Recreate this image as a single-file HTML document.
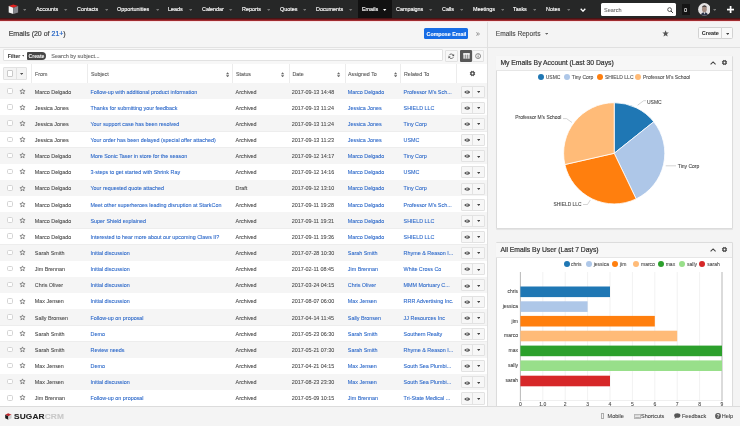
<!DOCTYPE html><html><head><meta charset="utf-8"><style>
*{margin:0;padding:0;box-sizing:border-box}
html,body{width:740px;height:426px;overflow:hidden;background:#fff;font-family:"Liberation Sans",sans-serif;color:#555}
#w{position:absolute;left:0;top:0;width:740px;height:426px;will-change:transform;overflow:hidden}
.a{position:absolute}
.car{position:absolute;width:0;height:0;border-left:1.7px solid transparent;border-right:1.7px solid transparent}
.tx{position:absolute;white-space:nowrap;line-height:1;-webkit-text-stroke:0.08px currentColor}
.lnk{color:#2a67c9}
</style></head><body><div id="w">
<div class="a" style="left:0px;top:0px;width:740px;height:17.6px;background:#262727"></div>
<div class="a" style="left:0px;top:17.5px;width:740px;height:1px;background:#4a1315"></div>
<div class="a" style="left:0px;top:18.5px;width:740px;height:1px;background:#6e1c1e"></div>
<div class="a" style="left:0px;top:19.5px;width:740px;height:1.1px;background:#a02c30"></div>
<div class="a" style="left:0px;top:20.5px;width:740px;height:1.2px;background:#f8e2e4"></div>
<svg class="a" style="left:8px;top:4px" width="11" height="11" viewBox="0 0 11 11">
<polygon points="5.3,0.6 10.1,2.1 5.3,3.7 0.7,2.1" fill="#e3211f"/>
<polygon points="0.7,2.1 5.3,3.7 5.3,10.1 0.7,8.6" fill="#f4f4f4"/>
<polygon points="5.3,3.7 10.1,2.1 10.1,8.6 5.3,10.1" fill="#85868c"/></svg>
<svg class="a" style="left:22.60px;top:8.75px" width="3.4" height="1.9" viewBox="0 0 3.4 1.9"><polygon points="0,0 3.4,0 1.7,1.9" fill="#777"/></svg>
<div class="tx " style="left:35.7px;top:6px;font-size:6px;color:#fff;-webkit-text-stroke:0.15px #fff;transform:scaleX(0.9);transform-origin:0 0">Accounts</div>
<svg class="a" style="left:64.20px;top:9.15px" width="3.4" height="1.9" viewBox="0 0 3.4 1.9"><polygon points="0,0 3.4,0 1.7,1.9" fill="#777"/></svg>
<div class="tx " style="left:77px;top:6px;font-size:6px;color:#fff;-webkit-text-stroke:0.15px #fff;transform:scaleX(0.9);transform-origin:0 0">Contacts</div>
<svg class="a" style="left:104.70px;top:9.15px" width="3.4" height="1.9" viewBox="0 0 3.4 1.9"><polygon points="0,0 3.4,0 1.7,1.9" fill="#777"/></svg>
<div class="tx " style="left:117px;top:6px;font-size:6px;color:#fff;-webkit-text-stroke:0.15px #fff;transform:scaleX(0.9);transform-origin:0 0">Opportunities</div>
<svg class="a" style="left:155.70px;top:9.15px" width="3.4" height="1.9" viewBox="0 0 3.4 1.9"><polygon points="0,0 3.4,0 1.7,1.9" fill="#777"/></svg>
<div class="tx " style="left:168px;top:6px;font-size:6px;color:#fff;-webkit-text-stroke:0.15px #fff;transform:scaleX(0.9);transform-origin:0 0">Leads</div>
<svg class="a" style="left:188.70px;top:9.15px" width="3.4" height="1.9" viewBox="0 0 3.4 1.9"><polygon points="0,0 3.4,0 1.7,1.9" fill="#777"/></svg>
<div class="tx " style="left:202px;top:6px;font-size:6px;color:#fff;-webkit-text-stroke:0.15px #fff;transform:scaleX(0.9);transform-origin:0 0">Calendar</div>
<svg class="a" style="left:229.20px;top:9.15px" width="3.4" height="1.9" viewBox="0 0 3.4 1.9"><polygon points="0,0 3.4,0 1.7,1.9" fill="#777"/></svg>
<div class="tx " style="left:242px;top:6px;font-size:6px;color:#fff;-webkit-text-stroke:0.15px #fff;transform:scaleX(0.9);transform-origin:0 0">Reports</div>
<svg class="a" style="left:266.70px;top:9.15px" width="3.4" height="1.9" viewBox="0 0 3.4 1.9"><polygon points="0,0 3.4,0 1.7,1.9" fill="#777"/></svg>
<div class="tx " style="left:279.5px;top:6px;font-size:6px;color:#fff;-webkit-text-stroke:0.15px #fff;transform:scaleX(0.9);transform-origin:0 0">Quotes</div>
<svg class="a" style="left:302.70px;top:9.15px" width="3.4" height="1.9" viewBox="0 0 3.4 1.9"><polygon points="0,0 3.4,0 1.7,1.9" fill="#777"/></svg>
<div class="tx " style="left:315.5px;top:6px;font-size:6px;color:#fff;-webkit-text-stroke:0.15px #fff;transform:scaleX(0.9);transform-origin:0 0">Documents</div>
<svg class="a" style="left:349.20px;top:9.15px" width="3.4" height="1.9" viewBox="0 0 3.4 1.9"><polygon points="0,0 3.4,0 1.7,1.9" fill="#777"/></svg>
<div class="a" style="left:358.1px;top:0px;width:33.5px;height:17.6px;background:#111"></div>
<div class="tx " style="left:361.8px;top:6px;font-size:6px;color:#fff;-webkit-text-stroke:0.15px #fff;transform:scaleX(0.9);transform-origin:0 0">Emails</div>
<svg class="a" style="left:383.30px;top:8.95px" width="3.4" height="1.9" viewBox="0 0 3.4 1.9"><polygon points="0,0 3.4,0 1.7,1.9" fill="#fff"/></svg>
<div class="tx " style="left:396px;top:6px;font-size:6px;color:#fff;-webkit-text-stroke:0.15px #fff;transform:scaleX(0.9);transform-origin:0 0">Campaigns</div>
<svg class="a" style="left:429.20px;top:9.15px" width="3.4" height="1.9" viewBox="0 0 3.4 1.9"><polygon points="0,0 3.4,0 1.7,1.9" fill="#777"/></svg>
<div class="tx " style="left:442px;top:6px;font-size:6px;color:#fff;-webkit-text-stroke:0.15px #fff;transform:scaleX(0.9);transform-origin:0 0">Calls</div>
<svg class="a" style="left:459.70px;top:9.15px" width="3.4" height="1.9" viewBox="0 0 3.4 1.9"><polygon points="0,0 3.4,0 1.7,1.9" fill="#777"/></svg>
<div class="tx " style="left:473px;top:6px;font-size:6px;color:#fff;-webkit-text-stroke:0.15px #fff;transform:scaleX(0.9);transform-origin:0 0">Meetings</div>
<svg class="a" style="left:500.70px;top:9.15px" width="3.4" height="1.9" viewBox="0 0 3.4 1.9"><polygon points="0,0 3.4,0 1.7,1.9" fill="#777"/></svg>
<div class="tx " style="left:513px;top:6px;font-size:6px;color:#fff;-webkit-text-stroke:0.15px #fff;transform:scaleX(0.9);transform-origin:0 0">Tasks</div>
<svg class="a" style="left:532.70px;top:9.15px" width="3.4" height="1.9" viewBox="0 0 3.4 1.9"><polygon points="0,0 3.4,0 1.7,1.9" fill="#777"/></svg>
<div class="tx " style="left:546px;top:6px;font-size:6px;color:#fff;-webkit-text-stroke:0.15px #fff;transform:scaleX(0.9);transform-origin:0 0">Notes</div>
<svg class="a" style="left:566.70px;top:9.15px" width="3.4" height="1.9" viewBox="0 0 3.4 1.9"><polygon points="0,0 3.4,0 1.7,1.9" fill="#777"/></svg>
<svg class="a" style="left:579.5px;top:7.6px" width="6" height="4.5" viewBox="0 0 6 4.5"><polyline points="0.7,0.8 3,3.2 5.3,0.8" fill="none" stroke="#fff" stroke-width="1.3"/></svg>
<div class="a" style="left:601.1px;top:3.3px;width:75.1px;height:12.8px;background:#fff;border-radius:1.5px"></div>
<div class="tx " style="left:604px;top:7px;font-size:6px;color:#6a6a6a;transform:scaleX(0.92);transform-origin:0 0">Search</div>
<svg class="a" style="left:667.3px;top:6.9px" width="6.5" height="6.5" viewBox="0 0 6.5 6.5"><circle cx="2.6" cy="2.6" r="1.9" fill="none" stroke="#333" stroke-width="0.8"/><line x1="4" y1="4" x2="5.9" y2="5.9" stroke="#333" stroke-width="1"/></svg>
<div class="a" style="left:682px;top:4px;width:7.6px;height:11.4px;background:#151515"></div>
<div class="tx " style="left:684.4px;top:7px;font-size:6px;color:#fff;transform:scaleX(0.95);transform-origin:0 0">0</div>
<svg class="a" style="left:697.6px;top:3.1px" width="12.8" height="12.8" viewBox="0 0 12.8 12.8"><defs><clipPath id="av"><circle cx="6.4" cy="6.4" r="6.3"/></clipPath></defs>
<g clip-path="url(#av)"><rect width="12.8" height="12.8" fill="#e6e4e4"/>
<ellipse cx="6.4" cy="6.2" rx="2.4" ry="3.1" fill="#a58d82"/>
<path d="M3.9,5 Q4,2.4 6.4,2.3 Q8.8,2.4 8.9,5 Q8.4,3.6 6.4,3.7 Q4.4,3.6 3.9,5Z" fill="#3b3433"/>
<path d="M2.5,12.8 Q3,9.5 6.4,9.2 Q9.8,9.5 10.3,12.8Z" fill="#2c3448"/>
<path d="M5.6,9.3 L6.4,11.5 L7.2,9.3Z" fill="#eee"/></g></svg>
<svg class="a" style="left:712.80px;top:8.95px" width="3.4" height="1.9" viewBox="0 0 3.4 1.9"><polygon points="0,0 3.4,0 1.7,1.9" fill="#777"/></svg>
<svg class="a" style="left:726.8px;top:5.7px" width="7.2" height="7.2" viewBox="0 0 7.2 7.2"><rect x="2.75" y="0" width="1.7" height="7.2" fill="#fff"/><rect x="0" y="2.75" width="7.2" height="1.7" fill="#fff"/></svg>
<div class="a" style="left:0px;top:21.7px;width:487px;height:25.5px;background:#f5f5f5"></div>
<div class="a" style="left:0px;top:47px;width:487px;height:0.8px;background:#e3e3e3"></div>
<div class="tx " style="left:8.7px;top:30px;font-size:7px;color:#444;-webkit-text-stroke:0.2px currentColor">Emails (20 of <span style="color:#2263c4">21+</span>)</div>
<div class="a" style="left:423.9px;top:27.6px;width:44.1px;height:11.9px;background:#176de5;border-radius:1.5px"></div>
<div class="tx " style="left:426.6px;top:32px;font-size:5.3px;font-weight:bold;color:#fff">Compose Email</div>
<svg class="a" style="left:476px;top:31.6px" width="4" height="4" viewBox="0 0 4 4"><polyline points="0.4,0.4 1.8,2 0.4,3.6" fill="none" stroke="#777" stroke-width="0.75"/><polyline points="2,0.4 3.4,2 2,3.6" fill="none" stroke="#777" stroke-width="0.75"/></svg>
<div class="a" style="left:0px;top:47.8px;width:487px;height:15.9px;background:#f7f7f7"></div>
<div class="a" style="left:0px;top:63.6px;width:487px;height:0.8px;background:#e4e4e4"></div>
<div class="a" style="left:3.2px;top:49.1px;width:440.3px;height:12.1px;background:#fff;border:0.6px solid #e2e2e2;border-radius:1px"></div>
<div class="tx " style="left:7.8px;top:54px;font-size:5.1px;font-weight:bold;color:#3a3a3a">Filter</div>
<svg class="a" style="left:21.60px;top:55.30px" width="2.8" height="1.6" viewBox="0 0 2.8 1.6"><polygon points="0,0 2.8,0 1.4,1.6" fill="#555"/></svg>
<div class="a" style="left:27.1px;top:51.9px;width:19px;height:7.8px;background:#474747;border-radius:1px 3.9px 3.9px 1px"></div>
<div class="tx " style="left:28.6px;top:54px;font-size:5.1px;font-weight:bold;color:#fff;-webkit-text-stroke:0px">Create</div>
<div class="tx " style="left:51.3px;top:54px;font-size:5.5px;color:#666">Search by subject...</div>
<div class="a" style="left:445.3px;top:49.8px;width:12.4px;height:12px;background:#f7f7f7;border:0.6px solid #e2e2e2;border-radius:1px"></div>
<svg class="a" style="left:448.3px;top:52.6px" width="6.5" height="6.5" viewBox="0 0 6.5 6.5"><path d="M5.3,2.4 A2.3,2.3 0 0 0 1.1,2.3" fill="none" stroke="#555" stroke-width="0.8"/><path d="M1.2,4.1 A2.3,2.3 0 0 0 5.4,4.2" fill="none" stroke="#555" stroke-width="0.8"/><polygon points="6.1,0.9 6.1,3.2 3.9,2.9" fill="#555"/><polygon points="0.4,5.6 0.4,3.3 2.6,3.6" fill="#555"/></svg>
<div class="a" style="left:460.2px;top:49.9px;width:11.9px;height:11.9px;background:#575757;border-radius:1px"></div>
<svg class="a" style="left:462.8px;top:52.8px" width="7" height="6" viewBox="0 0 7 6"><rect x="0.3" y="0.3" width="6.4" height="5.4" fill="#d8d8d8"/><rect x="0.3" y="0.3" width="6.4" height="1.3" fill="#fff"/><line x1="2.45" y1="1.6" x2="2.45" y2="5.7" stroke="#575757" stroke-width="0.5"/><line x1="4.55" y1="1.6" x2="4.55" y2="5.7" stroke="#575757" stroke-width="0.5"/></svg>
<div class="a" style="left:472.1px;top:49.8px;width:12.1px;height:12px;background:#f7f7f7;border:0.6px solid #e2e2e2;border-radius:1px"></div>
<svg class="a" style="left:475px;top:52.8px" width="6.2" height="6.2" viewBox="0 0 6.2 6.2"><circle cx="3.1" cy="3.1" r="2.5" fill="none" stroke="#555" stroke-width="0.65"/><line x1="3.1" y1="2.6" x2="3.1" y2="4.6" stroke="#555" stroke-width="0.75"/><circle cx="3.1" cy="1.75" r="0.42" fill="#555"/></svg>
<div class="a" style="left:0px;top:64.4px;width:487px;height:18.6px;background:#fff"></div>
<div class="a" style="left:0px;top:82.6px;width:487px;height:0.6px;background:#e8e8e8"></div>
<div class="a" style="left:3.3px;top:67.2px;width:24.2px;height:12.4px;background:#f4f4f4;border:0.6px solid #e2e2e2;border-radius:1px"></div>
<div class="a" style="left:15.5px;top:67.2px;width:0.6px;height:12.4px;background:#e2e2e2"></div>
<div class="a" style="left:6.8px;top:70.4px;width:6.2px;height:6.2px;background:#fff;border:0.6px solid #c9c9c9;border-radius:1px"></div>
<svg class="a" style="left:19.80px;top:72.65px" width="3.2" height="1.9" viewBox="0 0 3.2 1.9"><polygon points="0,0 3.2,0 1.6,1.9" fill="#555"/></svg>
<div class="a" style="left:31.3px;top:64.4px;width:0.7px;height:18.6px;background:#ececec"></div>
<div class="a" style="left:87.2px;top:64.4px;width:0.7px;height:18.6px;background:#ececec"></div>
<div class="a" style="left:232.2px;top:64.4px;width:0.7px;height:18.6px;background:#ececec"></div>
<div class="a" style="left:288.8px;top:64.4px;width:0.7px;height:18.6px;background:#ececec"></div>
<div class="a" style="left:344.8px;top:64.4px;width:0.7px;height:18.6px;background:#ececec"></div>
<div class="a" style="left:399.8px;top:64.4px;width:0.7px;height:18.6px;background:#ececec"></div>
<div class="a" style="left:456.0px;top:64.4px;width:0.7px;height:18.6px;background:#ececec"></div>
<div class="tx " style="left:35.1px;top:72px;font-size:5.3px;color:#555">From</div>
<div class="tx " style="left:91px;top:72px;font-size:5.3px;color:#555">Subject</div>
<div class="tx " style="left:236px;top:72px;font-size:5.3px;color:#555">Status</div>
<div class="tx " style="left:292.5px;top:72px;font-size:5.3px;color:#555">Date</div>
<div class="tx " style="left:348px;top:72px;font-size:5.3px;color:#555">Assigned To</div>
<div class="tx " style="left:404px;top:72px;font-size:5.3px;color:#555">Related To</div>
<svg class="a" style="left:225.9px;top:71.9px" width="3.2" height="5.6" viewBox="0 0 3.2 5.6"><polygon points="0,2.3 1.6,0.3 3.2,2.3" fill="#666"/><polygon points="0,3.3 1.6,5.3 3.2,3.3" fill="#666"/></svg>
<svg class="a" style="left:281.4px;top:71.9px" width="3.2" height="5.6" viewBox="0 0 3.2 5.6"><polygon points="0,2.3 1.6,0.3 3.2,2.3" fill="#666"/><polygon points="0,3.3 1.6,5.3 3.2,3.3" fill="#666"/></svg>
<svg class="a" style="left:337.4px;top:71.9px" width="3.2" height="5.6" viewBox="0 0 3.2 5.6"><polygon points="0,2.3 1.6,0.3 3.2,2.3" fill="#666"/><polygon points="0,3.3 1.6,5.3 3.2,3.3" fill="#666"/></svg>
<svg class="a" style="left:393.79999999999995px;top:71.9px" width="3.2" height="5.6" viewBox="0 0 3.2 5.6"><polygon points="0,2.3 1.6,0.3 3.2,2.3" fill="#666"/><polygon points="0,3.3 1.6,5.3 3.2,3.3" fill="#666"/></svg>
<svg class="a" style="left:468.1px;top:69.1px" width="9" height="9" viewBox="0 0 9 9"><circle cx="4.5" cy="4.5" r="1.62" fill="none" stroke="#555" stroke-width="1.40"/><rect x="4.00" y="1.70" width="1.0" height="1.40" rx="0.2" fill="#555" transform="rotate(22.5 4.5 4.5)"/><rect x="4.00" y="1.70" width="1.0" height="1.40" rx="0.2" fill="#555" transform="rotate(67.5 4.5 4.5)"/><rect x="4.00" y="1.70" width="1.0" height="1.40" rx="0.2" fill="#555" transform="rotate(112.5 4.5 4.5)"/><rect x="4.00" y="1.70" width="1.0" height="1.40" rx="0.2" fill="#555" transform="rotate(157.5 4.5 4.5)"/><rect x="4.00" y="1.70" width="1.0" height="1.40" rx="0.2" fill="#555" transform="rotate(202.5 4.5 4.5)"/><rect x="4.00" y="1.70" width="1.0" height="1.40" rx="0.2" fill="#555" transform="rotate(247.5 4.5 4.5)"/><rect x="4.00" y="1.70" width="1.0" height="1.40" rx="0.2" fill="#555" transform="rotate(292.5 4.5 4.5)"/><rect x="4.00" y="1.70" width="1.0" height="1.40" rx="0.2" fill="#555" transform="rotate(337.5 4.5 4.5)"/></svg>
<div class="a" style="left:0px;top:83.10px;width:487px;height:16.17px;background:#f5f5f5"></div>
<div class="a" style="left:0px;top:98.92px;width:487px;height:0.7px;background:#ededed"></div>
<div class="a" style="left:6.9px;top:88.10px;width:6.1px;height:5.6px;background:#fff;border:0.6px solid #d4d4d4;border-radius:1.6px"></div>
<svg class="a" style="left:18.5px;top:87.60px" width="7" height="7" viewBox="0 0 7 7"><polygon points="3.5,0.9 4.2,2.6 6.1,2.7 4.6,3.9 5.1,5.9 3.5,4.8 1.9,5.9 2.4,3.9 0.9,2.7 2.8,2.6" fill="none" stroke="#666" stroke-width="0.7" stroke-linejoin="round"/></svg>
<div class="tx " style="left:34.8px;top:90px;font-size:5.4px;color:#4a4a4a">Marco Delgado</div>
<div class="tx lnk" style="left:90.5px;top:90px;font-size:5.4px;">Follow-up with additional product information</div>
<div class="tx " style="left:235.6px;top:90px;font-size:5.4px;color:#4a4a4a">Archived</div>
<div class="tx " style="left:291.8px;top:90px;font-size:5.4px;color:#4a4a4a">2017-09-13 14:48</div>
<div class="tx lnk" style="left:347.8px;top:90px;font-size:5.4px;">Marco Delgado</div>
<div class="tx lnk" style="left:403.6px;top:90px;font-size:5.4px;">Professor M's Sch...</div>
<div class="a" style="left:460.8px;top:85.60px;width:24px;height:12.1px;background:#f7f7f7;border:0.6px solid #e2e2e2;border-radius:1px"></div>
<div class="a" style="left:472.4px;top:85.60px;width:0.6px;height:12.1px;background:#e2e2e2"></div>
<svg class="a" style="left:463.8px;top:89.80px" width="6.4" height="4.2" viewBox="0 0 6.4 4.2"><path d="M0.1,2.1 Q3.2,-1.1 6.3,2.1 Q3.2,5.3 0.1,2.1Z" fill="#505050"/><circle cx="3.2" cy="2.1" r="1.15" fill="#d0d0d0"/><circle cx="3.2" cy="2.1" r="0.6" fill="#505050"/></svg>
<svg class="a" style="left:477.1px;top:91px" width="3.4" height="2" viewBox="0 0 3.4 2"><polygon points="0,0 3.4,0 1.7,2" fill="#444"/></svg>
<div class="a" style="left:0px;top:99.27px;width:487px;height:16.17px;background:#fff"></div>
<div class="a" style="left:0px;top:115.09px;width:487px;height:0.7px;background:#ededed"></div>
<div class="a" style="left:6.9px;top:104.25px;width:6.1px;height:5.6px;background:#fff;border:0.6px solid #d4d4d4;border-radius:1.6px"></div>
<svg class="a" style="left:18.5px;top:103.75px" width="7" height="7" viewBox="0 0 7 7"><polygon points="3.5,0.9 4.2,2.6 6.1,2.7 4.6,3.9 5.1,5.9 3.5,4.8 1.9,5.9 2.4,3.9 0.9,2.7 2.8,2.6" fill="none" stroke="#666" stroke-width="0.7" stroke-linejoin="round"/></svg>
<div class="tx " style="left:34.8px;top:106px;font-size:5.4px;color:#4a4a4a">Jessica Jones</div>
<div class="tx lnk" style="left:90.5px;top:106px;font-size:5.4px;">Thanks for submitting your feedback</div>
<div class="tx " style="left:235.6px;top:106px;font-size:5.4px;color:#4a4a4a">Archived</div>
<div class="tx " style="left:291.8px;top:106px;font-size:5.4px;color:#4a4a4a">2017-09-13 11:24</div>
<div class="tx lnk" style="left:347.8px;top:106px;font-size:5.4px;">Jessica Jones</div>
<div class="tx lnk" style="left:403.6px;top:106px;font-size:5.4px;">SHIELD LLC</div>
<div class="a" style="left:460.8px;top:101.75px;width:24px;height:12.1px;background:#f7f7f7;border:0.6px solid #e2e2e2;border-radius:1px"></div>
<div class="a" style="left:472.4px;top:101.75px;width:0.6px;height:12.1px;background:#e2e2e2"></div>
<svg class="a" style="left:463.8px;top:105.95px" width="6.4" height="4.2" viewBox="0 0 6.4 4.2"><path d="M0.1,2.1 Q3.2,-1.1 6.3,2.1 Q3.2,5.3 0.1,2.1Z" fill="#505050"/><circle cx="3.2" cy="2.1" r="1.15" fill="#d0d0d0"/><circle cx="3.2" cy="2.1" r="0.6" fill="#505050"/></svg>
<svg class="a" style="left:477.1px;top:107px" width="3.4" height="2" viewBox="0 0 3.4 2"><polygon points="0,0 3.4,0 1.7,2" fill="#444"/></svg>
<div class="a" style="left:0px;top:115.44px;width:487px;height:16.17px;background:#f5f5f5"></div>
<div class="a" style="left:0px;top:131.26px;width:487px;height:0.7px;background:#ededed"></div>
<div class="a" style="left:6.9px;top:120.40px;width:6.1px;height:5.6px;background:#fff;border:0.6px solid #d4d4d4;border-radius:1.6px"></div>
<svg class="a" style="left:18.5px;top:119.90px" width="7" height="7" viewBox="0 0 7 7"><polygon points="3.5,0.9 4.2,2.6 6.1,2.7 4.6,3.9 5.1,5.9 3.5,4.8 1.9,5.9 2.4,3.9 0.9,2.7 2.8,2.6" fill="none" stroke="#666" stroke-width="0.7" stroke-linejoin="round"/></svg>
<div class="tx " style="left:34.8px;top:122px;font-size:5.4px;color:#4a4a4a">Jessica Jones</div>
<div class="tx lnk" style="left:90.5px;top:122px;font-size:5.4px;">Your support case has been resolved</div>
<div class="tx " style="left:235.6px;top:122px;font-size:5.4px;color:#4a4a4a">Archived</div>
<div class="tx " style="left:291.8px;top:122px;font-size:5.4px;color:#4a4a4a">2017-09-13 11:24</div>
<div class="tx lnk" style="left:347.8px;top:122px;font-size:5.4px;">Jessica Jones</div>
<div class="tx lnk" style="left:403.6px;top:122px;font-size:5.4px;">Tiny Corp</div>
<div class="a" style="left:460.8px;top:117.90px;width:24px;height:12.1px;background:#f7f7f7;border:0.6px solid #e2e2e2;border-radius:1px"></div>
<div class="a" style="left:472.4px;top:117.90px;width:0.6px;height:12.1px;background:#e2e2e2"></div>
<svg class="a" style="left:463.8px;top:122.10px" width="6.4" height="4.2" viewBox="0 0 6.4 4.2"><path d="M0.1,2.1 Q3.2,-1.1 6.3,2.1 Q3.2,5.3 0.1,2.1Z" fill="#505050"/><circle cx="3.2" cy="2.1" r="1.15" fill="#d0d0d0"/><circle cx="3.2" cy="2.1" r="0.6" fill="#505050"/></svg>
<svg class="a" style="left:477.1px;top:123px" width="3.4" height="2" viewBox="0 0 3.4 2"><polygon points="0,0 3.4,0 1.7,2" fill="#444"/></svg>
<div class="a" style="left:0px;top:131.61px;width:487px;height:16.17px;background:#fff"></div>
<div class="a" style="left:0px;top:147.43px;width:487px;height:0.7px;background:#ededed"></div>
<div class="a" style="left:6.9px;top:136.55px;width:6.1px;height:5.6px;background:#fff;border:0.6px solid #d4d4d4;border-radius:1.6px"></div>
<svg class="a" style="left:18.5px;top:136.05px" width="7" height="7" viewBox="0 0 7 7"><polygon points="3.5,0.9 4.2,2.6 6.1,2.7 4.6,3.9 5.1,5.9 3.5,4.8 1.9,5.9 2.4,3.9 0.9,2.7 2.8,2.6" fill="none" stroke="#666" stroke-width="0.7" stroke-linejoin="round"/></svg>
<div class="tx " style="left:34.8px;top:138px;font-size:5.4px;color:#4a4a4a">Jessica Jones</div>
<div class="tx lnk" style="left:90.5px;top:138px;font-size:5.4px;">Your order has been delayed (special offer attached)</div>
<div class="tx " style="left:235.6px;top:138px;font-size:5.4px;color:#4a4a4a">Archived</div>
<div class="tx " style="left:291.8px;top:138px;font-size:5.4px;color:#4a4a4a">2017-09-13 11:23</div>
<div class="tx lnk" style="left:347.8px;top:138px;font-size:5.4px;">Jessica Jones</div>
<div class="tx lnk" style="left:403.6px;top:138px;font-size:5.4px;">USMC</div>
<div class="a" style="left:460.8px;top:134.05px;width:24px;height:12.1px;background:#f7f7f7;border:0.6px solid #e2e2e2;border-radius:1px"></div>
<div class="a" style="left:472.4px;top:134.05px;width:0.6px;height:12.1px;background:#e2e2e2"></div>
<svg class="a" style="left:463.8px;top:138.25px" width="6.4" height="4.2" viewBox="0 0 6.4 4.2"><path d="M0.1,2.1 Q3.2,-1.1 6.3,2.1 Q3.2,5.3 0.1,2.1Z" fill="#505050"/><circle cx="3.2" cy="2.1" r="1.15" fill="#d0d0d0"/><circle cx="3.2" cy="2.1" r="0.6" fill="#505050"/></svg>
<svg class="a" style="left:477.1px;top:139px" width="3.4" height="2" viewBox="0 0 3.4 2"><polygon points="0,0 3.4,0 1.7,2" fill="#444"/></svg>
<div class="a" style="left:0px;top:147.78px;width:487px;height:16.17px;background:#f5f5f5"></div>
<div class="a" style="left:0px;top:163.60px;width:487px;height:0.7px;background:#ededed"></div>
<div class="a" style="left:6.9px;top:152.70px;width:6.1px;height:5.6px;background:#fff;border:0.6px solid #d4d4d4;border-radius:1.6px"></div>
<svg class="a" style="left:18.5px;top:152.20px" width="7" height="7" viewBox="0 0 7 7"><polygon points="3.5,0.9 4.2,2.6 6.1,2.7 4.6,3.9 5.1,5.9 3.5,4.8 1.9,5.9 2.4,3.9 0.9,2.7 2.8,2.6" fill="none" stroke="#666" stroke-width="0.7" stroke-linejoin="round"/></svg>
<div class="tx " style="left:34.8px;top:154px;font-size:5.4px;color:#4a4a4a">Marco Delgado</div>
<div class="tx lnk" style="left:90.5px;top:154px;font-size:5.4px;">More Sonic Taser in store for the season</div>
<div class="tx " style="left:235.6px;top:154px;font-size:5.4px;color:#4a4a4a">Archived</div>
<div class="tx " style="left:291.8px;top:154px;font-size:5.4px;color:#4a4a4a">2017-09-12 14:17</div>
<div class="tx lnk" style="left:347.8px;top:154px;font-size:5.4px;">Marco Delgado</div>
<div class="tx lnk" style="left:403.6px;top:154px;font-size:5.4px;">Tiny Corp</div>
<div class="a" style="left:460.8px;top:150.20px;width:24px;height:12.1px;background:#f7f7f7;border:0.6px solid #e2e2e2;border-radius:1px"></div>
<div class="a" style="left:472.4px;top:150.20px;width:0.6px;height:12.1px;background:#e2e2e2"></div>
<svg class="a" style="left:463.8px;top:154.40px" width="6.4" height="4.2" viewBox="0 0 6.4 4.2"><path d="M0.1,2.1 Q3.2,-1.1 6.3,2.1 Q3.2,5.3 0.1,2.1Z" fill="#505050"/><circle cx="3.2" cy="2.1" r="1.15" fill="#d0d0d0"/><circle cx="3.2" cy="2.1" r="0.6" fill="#505050"/></svg>
<svg class="a" style="left:477.1px;top:156px" width="3.4" height="2" viewBox="0 0 3.4 2"><polygon points="0,0 3.4,0 1.7,2" fill="#444"/></svg>
<div class="a" style="left:0px;top:163.95px;width:487px;height:16.17px;background:#fff"></div>
<div class="a" style="left:0px;top:179.77px;width:487px;height:0.7px;background:#ededed"></div>
<div class="a" style="left:6.9px;top:168.85px;width:6.1px;height:5.6px;background:#fff;border:0.6px solid #d4d4d4;border-radius:1.6px"></div>
<svg class="a" style="left:18.5px;top:168.35px" width="7" height="7" viewBox="0 0 7 7"><polygon points="3.5,0.9 4.2,2.6 6.1,2.7 4.6,3.9 5.1,5.9 3.5,4.8 1.9,5.9 2.4,3.9 0.9,2.7 2.8,2.6" fill="none" stroke="#666" stroke-width="0.7" stroke-linejoin="round"/></svg>
<div class="tx " style="left:34.8px;top:170px;font-size:5.4px;color:#4a4a4a">Marco Delgado</div>
<div class="tx lnk" style="left:90.5px;top:170px;font-size:5.4px;">3-steps to get started with Shrink Ray</div>
<div class="tx " style="left:235.6px;top:170px;font-size:5.4px;color:#4a4a4a">Archived</div>
<div class="tx " style="left:291.8px;top:170px;font-size:5.4px;color:#4a4a4a">2017-09-12 14:16</div>
<div class="tx lnk" style="left:347.8px;top:170px;font-size:5.4px;">Marco Delgado</div>
<div class="tx lnk" style="left:403.6px;top:170px;font-size:5.4px;">USMC</div>
<div class="a" style="left:460.8px;top:166.35px;width:24px;height:12.1px;background:#f7f7f7;border:0.6px solid #e2e2e2;border-radius:1px"></div>
<div class="a" style="left:472.4px;top:166.35px;width:0.6px;height:12.1px;background:#e2e2e2"></div>
<svg class="a" style="left:463.8px;top:170.55px" width="6.4" height="4.2" viewBox="0 0 6.4 4.2"><path d="M0.1,2.1 Q3.2,-1.1 6.3,2.1 Q3.2,5.3 0.1,2.1Z" fill="#505050"/><circle cx="3.2" cy="2.1" r="1.15" fill="#d0d0d0"/><circle cx="3.2" cy="2.1" r="0.6" fill="#505050"/></svg>
<svg class="a" style="left:477.1px;top:172px" width="3.4" height="2" viewBox="0 0 3.4 2"><polygon points="0,0 3.4,0 1.7,2" fill="#444"/></svg>
<div class="a" style="left:0px;top:180.12px;width:487px;height:16.17px;background:#f5f5f5"></div>
<div class="a" style="left:0px;top:195.94px;width:487px;height:0.7px;background:#ededed"></div>
<div class="a" style="left:6.9px;top:185.00px;width:6.1px;height:5.6px;background:#fff;border:0.6px solid #d4d4d4;border-radius:1.6px"></div>
<svg class="a" style="left:18.5px;top:184.50px" width="7" height="7" viewBox="0 0 7 7"><polygon points="3.5,0.9 4.2,2.6 6.1,2.7 4.6,3.9 5.1,5.9 3.5,4.8 1.9,5.9 2.4,3.9 0.9,2.7 2.8,2.6" fill="none" stroke="#666" stroke-width="0.7" stroke-linejoin="round"/></svg>
<div class="tx " style="left:34.8px;top:186px;font-size:5.4px;color:#4a4a4a">Marco Delgado</div>
<div class="tx lnk" style="left:90.5px;top:186px;font-size:5.4px;">Your requested quote attached</div>
<div class="tx " style="left:235.6px;top:186px;font-size:5.4px;color:#4a4a4a">Draft</div>
<div class="tx " style="left:291.8px;top:186px;font-size:5.4px;color:#4a4a4a">2017-09-12 13:10</div>
<div class="tx lnk" style="left:347.8px;top:186px;font-size:5.4px;">Marco Delgado</div>
<div class="tx lnk" style="left:403.6px;top:186px;font-size:5.4px;">Tiny Corp</div>
<div class="a" style="left:460.8px;top:182.50px;width:24px;height:12.1px;background:#f7f7f7;border:0.6px solid #e2e2e2;border-radius:1px"></div>
<div class="a" style="left:472.4px;top:182.50px;width:0.6px;height:12.1px;background:#e2e2e2"></div>
<svg class="a" style="left:463.8px;top:186.70px" width="6.4" height="4.2" viewBox="0 0 6.4 4.2"><path d="M0.1,2.1 Q3.2,-1.1 6.3,2.1 Q3.2,5.3 0.1,2.1Z" fill="#505050"/><circle cx="3.2" cy="2.1" r="1.15" fill="#d0d0d0"/><circle cx="3.2" cy="2.1" r="0.6" fill="#505050"/></svg>
<svg class="a" style="left:477.1px;top:188px" width="3.4" height="2" viewBox="0 0 3.4 2"><polygon points="0,0 3.4,0 1.7,2" fill="#444"/></svg>
<div class="a" style="left:0px;top:196.29px;width:487px;height:16.17px;background:#fff"></div>
<div class="a" style="left:0px;top:212.11px;width:487px;height:0.7px;background:#ededed"></div>
<div class="a" style="left:6.9px;top:201.15px;width:6.1px;height:5.6px;background:#fff;border:0.6px solid #d4d4d4;border-radius:1.6px"></div>
<svg class="a" style="left:18.5px;top:200.65px" width="7" height="7" viewBox="0 0 7 7"><polygon points="3.5,0.9 4.2,2.6 6.1,2.7 4.6,3.9 5.1,5.9 3.5,4.8 1.9,5.9 2.4,3.9 0.9,2.7 2.8,2.6" fill="none" stroke="#666" stroke-width="0.7" stroke-linejoin="round"/></svg>
<div class="tx " style="left:34.8px;top:203px;font-size:5.4px;color:#4a4a4a">Marco Delgado</div>
<div class="tx lnk" style="left:90.5px;top:203px;font-size:5.4px;">Meet other superheroes leading disruption at StarkCon</div>
<div class="tx " style="left:235.6px;top:203px;font-size:5.4px;color:#4a4a4a">Archived</div>
<div class="tx " style="left:291.8px;top:203px;font-size:5.4px;color:#4a4a4a">2017-09-11 19:28</div>
<div class="tx lnk" style="left:347.8px;top:203px;font-size:5.4px;">Marco Delgado</div>
<div class="tx lnk" style="left:403.6px;top:203px;font-size:5.4px;">Professor M's Sch...</div>
<div class="a" style="left:460.8px;top:198.65px;width:24px;height:12.1px;background:#f7f7f7;border:0.6px solid #e2e2e2;border-radius:1px"></div>
<div class="a" style="left:472.4px;top:198.65px;width:0.6px;height:12.1px;background:#e2e2e2"></div>
<svg class="a" style="left:463.8px;top:202.85px" width="6.4" height="4.2" viewBox="0 0 6.4 4.2"><path d="M0.1,2.1 Q3.2,-1.1 6.3,2.1 Q3.2,5.3 0.1,2.1Z" fill="#505050"/><circle cx="3.2" cy="2.1" r="1.15" fill="#d0d0d0"/><circle cx="3.2" cy="2.1" r="0.6" fill="#505050"/></svg>
<svg class="a" style="left:477.1px;top:204px" width="3.4" height="2" viewBox="0 0 3.4 2"><polygon points="0,0 3.4,0 1.7,2" fill="#444"/></svg>
<div class="a" style="left:0px;top:212.46px;width:487px;height:16.17px;background:#f5f5f5"></div>
<div class="a" style="left:0px;top:228.28px;width:487px;height:0.7px;background:#ededed"></div>
<div class="a" style="left:6.9px;top:217.30px;width:6.1px;height:5.6px;background:#fff;border:0.6px solid #d4d4d4;border-radius:1.6px"></div>
<svg class="a" style="left:18.5px;top:216.80px" width="7" height="7" viewBox="0 0 7 7"><polygon points="3.5,0.9 4.2,2.6 6.1,2.7 4.6,3.9 5.1,5.9 3.5,4.8 1.9,5.9 2.4,3.9 0.9,2.7 2.8,2.6" fill="none" stroke="#666" stroke-width="0.7" stroke-linejoin="round"/></svg>
<div class="tx " style="left:34.8px;top:219px;font-size:5.4px;color:#4a4a4a">Marco Delgado</div>
<div class="tx lnk" style="left:90.5px;top:219px;font-size:5.4px;">Super Shield explained</div>
<div class="tx " style="left:235.6px;top:219px;font-size:5.4px;color:#4a4a4a">Archived</div>
<div class="tx " style="left:291.8px;top:219px;font-size:5.4px;color:#4a4a4a">2017-09-11 19:31</div>
<div class="tx lnk" style="left:347.8px;top:219px;font-size:5.4px;">Marco Delgado</div>
<div class="tx lnk" style="left:403.6px;top:219px;font-size:5.4px;">SHIELD LLC</div>
<div class="a" style="left:460.8px;top:214.80px;width:24px;height:12.1px;background:#f7f7f7;border:0.6px solid #e2e2e2;border-radius:1px"></div>
<div class="a" style="left:472.4px;top:214.80px;width:0.6px;height:12.1px;background:#e2e2e2"></div>
<svg class="a" style="left:463.8px;top:219.00px" width="6.4" height="4.2" viewBox="0 0 6.4 4.2"><path d="M0.1,2.1 Q3.2,-1.1 6.3,2.1 Q3.2,5.3 0.1,2.1Z" fill="#505050"/><circle cx="3.2" cy="2.1" r="1.15" fill="#d0d0d0"/><circle cx="3.2" cy="2.1" r="0.6" fill="#505050"/></svg>
<svg class="a" style="left:477.1px;top:220px" width="3.4" height="2" viewBox="0 0 3.4 2"><polygon points="0,0 3.4,0 1.7,2" fill="#444"/></svg>
<div class="a" style="left:0px;top:228.63px;width:487px;height:16.17px;background:#fff"></div>
<div class="a" style="left:0px;top:244.45px;width:487px;height:0.7px;background:#ededed"></div>
<div class="a" style="left:6.9px;top:233.45px;width:6.1px;height:5.6px;background:#fff;border:0.6px solid #d4d4d4;border-radius:1.6px"></div>
<svg class="a" style="left:18.5px;top:232.95px" width="7" height="7" viewBox="0 0 7 7"><polygon points="3.5,0.9 4.2,2.6 6.1,2.7 4.6,3.9 5.1,5.9 3.5,4.8 1.9,5.9 2.4,3.9 0.9,2.7 2.8,2.6" fill="none" stroke="#666" stroke-width="0.7" stroke-linejoin="round"/></svg>
<div class="tx " style="left:34.8px;top:235px;font-size:5.4px;color:#4a4a4a">Marco Delgado</div>
<div class="tx lnk" style="left:90.5px;top:235px;font-size:5.4px;">Interested to hear more about our upcoming Claws II?</div>
<div class="tx " style="left:235.6px;top:235px;font-size:5.4px;color:#4a4a4a">Archived</div>
<div class="tx " style="left:291.8px;top:235px;font-size:5.4px;color:#4a4a4a">2017-09-11 19:36</div>
<div class="tx lnk" style="left:347.8px;top:235px;font-size:5.4px;">Marco Delgado</div>
<div class="tx lnk" style="left:403.6px;top:235px;font-size:5.4px;">SHIELD LLC</div>
<div class="a" style="left:460.8px;top:230.95px;width:24px;height:12.1px;background:#f7f7f7;border:0.6px solid #e2e2e2;border-radius:1px"></div>
<div class="a" style="left:472.4px;top:230.95px;width:0.6px;height:12.1px;background:#e2e2e2"></div>
<svg class="a" style="left:463.8px;top:235.15px" width="6.4" height="4.2" viewBox="0 0 6.4 4.2"><path d="M0.1,2.1 Q3.2,-1.1 6.3,2.1 Q3.2,5.3 0.1,2.1Z" fill="#505050"/><circle cx="3.2" cy="2.1" r="1.15" fill="#d0d0d0"/><circle cx="3.2" cy="2.1" r="0.6" fill="#505050"/></svg>
<svg class="a" style="left:477.1px;top:236px" width="3.4" height="2" viewBox="0 0 3.4 2"><polygon points="0,0 3.4,0 1.7,2" fill="#444"/></svg>
<div class="a" style="left:0px;top:244.80px;width:487px;height:16.17px;background:#f5f5f5"></div>
<div class="a" style="left:0px;top:260.62px;width:487px;height:0.7px;background:#ededed"></div>
<div class="a" style="left:6.9px;top:249.60px;width:6.1px;height:5.6px;background:#fff;border:0.6px solid #d4d4d4;border-radius:1.6px"></div>
<svg class="a" style="left:18.5px;top:249.10px" width="7" height="7" viewBox="0 0 7 7"><polygon points="3.5,0.9 4.2,2.6 6.1,2.7 4.6,3.9 5.1,5.9 3.5,4.8 1.9,5.9 2.4,3.9 0.9,2.7 2.8,2.6" fill="none" stroke="#666" stroke-width="0.7" stroke-linejoin="round"/></svg>
<div class="tx " style="left:34.8px;top:251px;font-size:5.4px;color:#4a4a4a">Sarah Smith</div>
<div class="tx lnk" style="left:90.5px;top:251px;font-size:5.4px;">Initial discussion</div>
<div class="tx " style="left:235.6px;top:251px;font-size:5.4px;color:#4a4a4a">Archived</div>
<div class="tx " style="left:291.8px;top:251px;font-size:5.4px;color:#4a4a4a">2017-07-28 10:30</div>
<div class="tx lnk" style="left:347.8px;top:251px;font-size:5.4px;">Sarah Smith</div>
<div class="tx lnk" style="left:403.6px;top:251px;font-size:5.4px;">Rhyme &amp; Reason I...</div>
<div class="a" style="left:460.8px;top:247.10px;width:24px;height:12.1px;background:#f7f7f7;border:0.6px solid #e2e2e2;border-radius:1px"></div>
<div class="a" style="left:472.4px;top:247.10px;width:0.6px;height:12.1px;background:#e2e2e2"></div>
<svg class="a" style="left:463.8px;top:251.30px" width="6.4" height="4.2" viewBox="0 0 6.4 4.2"><path d="M0.1,2.1 Q3.2,-1.1 6.3,2.1 Q3.2,5.3 0.1,2.1Z" fill="#505050"/><circle cx="3.2" cy="2.1" r="1.15" fill="#d0d0d0"/><circle cx="3.2" cy="2.1" r="0.6" fill="#505050"/></svg>
<svg class="a" style="left:477.1px;top:252px" width="3.4" height="2" viewBox="0 0 3.4 2"><polygon points="0,0 3.4,0 1.7,2" fill="#444"/></svg>
<div class="a" style="left:0px;top:260.97px;width:487px;height:16.17px;background:#fff"></div>
<div class="a" style="left:0px;top:276.79px;width:487px;height:0.7px;background:#ededed"></div>
<div class="a" style="left:6.9px;top:265.75px;width:6.1px;height:5.6px;background:#fff;border:0.6px solid #d4d4d4;border-radius:1.6px"></div>
<svg class="a" style="left:18.5px;top:265.25px" width="7" height="7" viewBox="0 0 7 7"><polygon points="3.5,0.9 4.2,2.6 6.1,2.7 4.6,3.9 5.1,5.9 3.5,4.8 1.9,5.9 2.4,3.9 0.9,2.7 2.8,2.6" fill="none" stroke="#666" stroke-width="0.7" stroke-linejoin="round"/></svg>
<div class="tx " style="left:34.8px;top:267px;font-size:5.4px;color:#4a4a4a">Jim Brennan</div>
<div class="tx lnk" style="left:90.5px;top:267px;font-size:5.4px;">Initial discussion</div>
<div class="tx " style="left:235.6px;top:267px;font-size:5.4px;color:#4a4a4a">Archived</div>
<div class="tx " style="left:291.8px;top:267px;font-size:5.4px;color:#4a4a4a">2017-02-11 08:45</div>
<div class="tx lnk" style="left:347.8px;top:267px;font-size:5.4px;">Jim Brennan</div>
<div class="tx lnk" style="left:403.6px;top:267px;font-size:5.4px;">White Cross Co</div>
<div class="a" style="left:460.8px;top:263.25px;width:24px;height:12.1px;background:#f7f7f7;border:0.6px solid #e2e2e2;border-radius:1px"></div>
<div class="a" style="left:472.4px;top:263.25px;width:0.6px;height:12.1px;background:#e2e2e2"></div>
<svg class="a" style="left:463.8px;top:267.45px" width="6.4" height="4.2" viewBox="0 0 6.4 4.2"><path d="M0.1,2.1 Q3.2,-1.1 6.3,2.1 Q3.2,5.3 0.1,2.1Z" fill="#505050"/><circle cx="3.2" cy="2.1" r="1.15" fill="#d0d0d0"/><circle cx="3.2" cy="2.1" r="0.6" fill="#505050"/></svg>
<svg class="a" style="left:477.1px;top:269px" width="3.4" height="2" viewBox="0 0 3.4 2"><polygon points="0,0 3.4,0 1.7,2" fill="#444"/></svg>
<div class="a" style="left:0px;top:277.14px;width:487px;height:16.17px;background:#f5f5f5"></div>
<div class="a" style="left:0px;top:292.96px;width:487px;height:0.7px;background:#ededed"></div>
<div class="a" style="left:6.9px;top:281.90px;width:6.1px;height:5.6px;background:#fff;border:0.6px solid #d4d4d4;border-radius:1.6px"></div>
<svg class="a" style="left:18.5px;top:281.40px" width="7" height="7" viewBox="0 0 7 7"><polygon points="3.5,0.9 4.2,2.6 6.1,2.7 4.6,3.9 5.1,5.9 3.5,4.8 1.9,5.9 2.4,3.9 0.9,2.7 2.8,2.6" fill="none" stroke="#666" stroke-width="0.7" stroke-linejoin="round"/></svg>
<div class="tx " style="left:34.8px;top:283px;font-size:5.4px;color:#4a4a4a">Chris Oliver</div>
<div class="tx lnk" style="left:90.5px;top:283px;font-size:5.4px;">Initial discussion</div>
<div class="tx " style="left:235.6px;top:283px;font-size:5.4px;color:#4a4a4a">Archived</div>
<div class="tx " style="left:291.8px;top:283px;font-size:5.4px;color:#4a4a4a">2017-03-24 04:15</div>
<div class="tx lnk" style="left:347.8px;top:283px;font-size:5.4px;">Chris Oliver</div>
<div class="tx lnk" style="left:403.6px;top:283px;font-size:5.4px;">MMM Mortuary C...</div>
<div class="a" style="left:460.8px;top:279.40px;width:24px;height:12.1px;background:#f7f7f7;border:0.6px solid #e2e2e2;border-radius:1px"></div>
<div class="a" style="left:472.4px;top:279.40px;width:0.6px;height:12.1px;background:#e2e2e2"></div>
<svg class="a" style="left:463.8px;top:283.60px" width="6.4" height="4.2" viewBox="0 0 6.4 4.2"><path d="M0.1,2.1 Q3.2,-1.1 6.3,2.1 Q3.2,5.3 0.1,2.1Z" fill="#505050"/><circle cx="3.2" cy="2.1" r="1.15" fill="#d0d0d0"/><circle cx="3.2" cy="2.1" r="0.6" fill="#505050"/></svg>
<svg class="a" style="left:477.1px;top:285px" width="3.4" height="2" viewBox="0 0 3.4 2"><polygon points="0,0 3.4,0 1.7,2" fill="#444"/></svg>
<div class="a" style="left:0px;top:293.31px;width:487px;height:16.17px;background:#fff"></div>
<div class="a" style="left:0px;top:309.13px;width:487px;height:0.7px;background:#ededed"></div>
<div class="a" style="left:6.9px;top:298.05px;width:6.1px;height:5.6px;background:#fff;border:0.6px solid #d4d4d4;border-radius:1.6px"></div>
<svg class="a" style="left:18.5px;top:297.55px" width="7" height="7" viewBox="0 0 7 7"><polygon points="3.5,0.9 4.2,2.6 6.1,2.7 4.6,3.9 5.1,5.9 3.5,4.8 1.9,5.9 2.4,3.9 0.9,2.7 2.8,2.6" fill="none" stroke="#666" stroke-width="0.7" stroke-linejoin="round"/></svg>
<div class="tx " style="left:34.8px;top:299px;font-size:5.4px;color:#4a4a4a">Max Jensen</div>
<div class="tx lnk" style="left:90.5px;top:299px;font-size:5.4px;">Initial discussion</div>
<div class="tx " style="left:235.6px;top:299px;font-size:5.4px;color:#4a4a4a">Archived</div>
<div class="tx " style="left:291.8px;top:299px;font-size:5.4px;color:#4a4a4a">2017-08-07 06:00</div>
<div class="tx lnk" style="left:347.8px;top:299px;font-size:5.4px;">Max Jensen</div>
<div class="tx lnk" style="left:403.6px;top:299px;font-size:5.4px;">RRR Advertising Inc.</div>
<div class="a" style="left:460.8px;top:295.55px;width:24px;height:12.1px;background:#f7f7f7;border:0.6px solid #e2e2e2;border-radius:1px"></div>
<div class="a" style="left:472.4px;top:295.55px;width:0.6px;height:12.1px;background:#e2e2e2"></div>
<svg class="a" style="left:463.8px;top:299.75px" width="6.4" height="4.2" viewBox="0 0 6.4 4.2"><path d="M0.1,2.1 Q3.2,-1.1 6.3,2.1 Q3.2,5.3 0.1,2.1Z" fill="#505050"/><circle cx="3.2" cy="2.1" r="1.15" fill="#d0d0d0"/><circle cx="3.2" cy="2.1" r="0.6" fill="#505050"/></svg>
<svg class="a" style="left:477.1px;top:301px" width="3.4" height="2" viewBox="0 0 3.4 2"><polygon points="0,0 3.4,0 1.7,2" fill="#444"/></svg>
<div class="a" style="left:0px;top:309.48px;width:487px;height:16.17px;background:#f5f5f5"></div>
<div class="a" style="left:0px;top:325.30px;width:487px;height:0.7px;background:#ededed"></div>
<div class="a" style="left:6.9px;top:314.20px;width:6.1px;height:5.6px;background:#fff;border:0.6px solid #d4d4d4;border-radius:1.6px"></div>
<svg class="a" style="left:18.5px;top:313.70px" width="7" height="7" viewBox="0 0 7 7"><polygon points="3.5,0.9 4.2,2.6 6.1,2.7 4.6,3.9 5.1,5.9 3.5,4.8 1.9,5.9 2.4,3.9 0.9,2.7 2.8,2.6" fill="none" stroke="#666" stroke-width="0.7" stroke-linejoin="round"/></svg>
<div class="tx " style="left:34.8px;top:316px;font-size:5.4px;color:#4a4a4a">Sally Bronsen</div>
<div class="tx lnk" style="left:90.5px;top:316px;font-size:5.4px;">Follow-up on proposal</div>
<div class="tx " style="left:235.6px;top:316px;font-size:5.4px;color:#4a4a4a">Archived</div>
<div class="tx " style="left:291.8px;top:316px;font-size:5.4px;color:#4a4a4a">2017-04-14 11:45</div>
<div class="tx lnk" style="left:347.8px;top:316px;font-size:5.4px;">Sally Bronsen</div>
<div class="tx lnk" style="left:403.6px;top:316px;font-size:5.4px;">JJ Resources Inc</div>
<div class="a" style="left:460.8px;top:311.70px;width:24px;height:12.1px;background:#f7f7f7;border:0.6px solid #e2e2e2;border-radius:1px"></div>
<div class="a" style="left:472.4px;top:311.70px;width:0.6px;height:12.1px;background:#e2e2e2"></div>
<svg class="a" style="left:463.8px;top:315.90px" width="6.4" height="4.2" viewBox="0 0 6.4 4.2"><path d="M0.1,2.1 Q3.2,-1.1 6.3,2.1 Q3.2,5.3 0.1,2.1Z" fill="#505050"/><circle cx="3.2" cy="2.1" r="1.15" fill="#d0d0d0"/><circle cx="3.2" cy="2.1" r="0.6" fill="#505050"/></svg>
<svg class="a" style="left:477.1px;top:317px" width="3.4" height="2" viewBox="0 0 3.4 2"><polygon points="0,0 3.4,0 1.7,2" fill="#444"/></svg>
<div class="a" style="left:0px;top:325.65px;width:487px;height:16.17px;background:#fff"></div>
<div class="a" style="left:0px;top:341.47px;width:487px;height:0.7px;background:#ededed"></div>
<div class="a" style="left:6.9px;top:330.35px;width:6.1px;height:5.6px;background:#fff;border:0.6px solid #d4d4d4;border-radius:1.6px"></div>
<svg class="a" style="left:18.5px;top:329.85px" width="7" height="7" viewBox="0 0 7 7"><polygon points="3.5,0.9 4.2,2.6 6.1,2.7 4.6,3.9 5.1,5.9 3.5,4.8 1.9,5.9 2.4,3.9 0.9,2.7 2.8,2.6" fill="none" stroke="#666" stroke-width="0.7" stroke-linejoin="round"/></svg>
<div class="tx " style="left:34.8px;top:332px;font-size:5.4px;color:#4a4a4a">Sarah Smith</div>
<div class="tx lnk" style="left:90.5px;top:332px;font-size:5.4px;">Demo</div>
<div class="tx " style="left:235.6px;top:332px;font-size:5.4px;color:#4a4a4a">Archived</div>
<div class="tx " style="left:291.8px;top:332px;font-size:5.4px;color:#4a4a4a">2017-05-23 06:30</div>
<div class="tx lnk" style="left:347.8px;top:332px;font-size:5.4px;">Sarah Smith</div>
<div class="tx lnk" style="left:403.6px;top:332px;font-size:5.4px;">Southern Realty</div>
<div class="a" style="left:460.8px;top:327.85px;width:24px;height:12.1px;background:#f7f7f7;border:0.6px solid #e2e2e2;border-radius:1px"></div>
<div class="a" style="left:472.4px;top:327.85px;width:0.6px;height:12.1px;background:#e2e2e2"></div>
<svg class="a" style="left:463.8px;top:332.05px" width="6.4" height="4.2" viewBox="0 0 6.4 4.2"><path d="M0.1,2.1 Q3.2,-1.1 6.3,2.1 Q3.2,5.3 0.1,2.1Z" fill="#505050"/><circle cx="3.2" cy="2.1" r="1.15" fill="#d0d0d0"/><circle cx="3.2" cy="2.1" r="0.6" fill="#505050"/></svg>
<svg class="a" style="left:477.1px;top:333px" width="3.4" height="2" viewBox="0 0 3.4 2"><polygon points="0,0 3.4,0 1.7,2" fill="#444"/></svg>
<div class="a" style="left:0px;top:341.82px;width:487px;height:16.17px;background:#f5f5f5"></div>
<div class="a" style="left:0px;top:357.64px;width:487px;height:0.7px;background:#ededed"></div>
<div class="a" style="left:6.9px;top:346.50px;width:6.1px;height:5.6px;background:#fff;border:0.6px solid #d4d4d4;border-radius:1.6px"></div>
<svg class="a" style="left:18.5px;top:346.00px" width="7" height="7" viewBox="0 0 7 7"><polygon points="3.5,0.9 4.2,2.6 6.1,2.7 4.6,3.9 5.1,5.9 3.5,4.8 1.9,5.9 2.4,3.9 0.9,2.7 2.8,2.6" fill="none" stroke="#666" stroke-width="0.7" stroke-linejoin="round"/></svg>
<div class="tx " style="left:34.8px;top:348px;font-size:5.4px;color:#4a4a4a">Sarah Smith</div>
<div class="tx lnk" style="left:90.5px;top:348px;font-size:5.4px;">Review needs</div>
<div class="tx " style="left:235.6px;top:348px;font-size:5.4px;color:#4a4a4a">Archived</div>
<div class="tx " style="left:291.8px;top:348px;font-size:5.4px;color:#4a4a4a">2017-05-21 07:30</div>
<div class="tx lnk" style="left:347.8px;top:348px;font-size:5.4px;">Sarah Smith</div>
<div class="tx lnk" style="left:403.6px;top:348px;font-size:5.4px;">Rhyme &amp; Reason I...</div>
<div class="a" style="left:460.8px;top:344.00px;width:24px;height:12.1px;background:#f7f7f7;border:0.6px solid #e2e2e2;border-radius:1px"></div>
<div class="a" style="left:472.4px;top:344.00px;width:0.6px;height:12.1px;background:#e2e2e2"></div>
<svg class="a" style="left:463.8px;top:348.20px" width="6.4" height="4.2" viewBox="0 0 6.4 4.2"><path d="M0.1,2.1 Q3.2,-1.1 6.3,2.1 Q3.2,5.3 0.1,2.1Z" fill="#505050"/><circle cx="3.2" cy="2.1" r="1.15" fill="#d0d0d0"/><circle cx="3.2" cy="2.1" r="0.6" fill="#505050"/></svg>
<svg class="a" style="left:477.1px;top:349px" width="3.4" height="2" viewBox="0 0 3.4 2"><polygon points="0,0 3.4,0 1.7,2" fill="#444"/></svg>
<div class="a" style="left:0px;top:357.99px;width:487px;height:16.17px;background:#fff"></div>
<div class="a" style="left:0px;top:373.81px;width:487px;height:0.7px;background:#ededed"></div>
<div class="a" style="left:6.9px;top:362.65px;width:6.1px;height:5.6px;background:#fff;border:0.6px solid #d4d4d4;border-radius:1.6px"></div>
<svg class="a" style="left:18.5px;top:362.15px" width="7" height="7" viewBox="0 0 7 7"><polygon points="3.5,0.9 4.2,2.6 6.1,2.7 4.6,3.9 5.1,5.9 3.5,4.8 1.9,5.9 2.4,3.9 0.9,2.7 2.8,2.6" fill="none" stroke="#666" stroke-width="0.7" stroke-linejoin="round"/></svg>
<div class="tx " style="left:34.8px;top:364px;font-size:5.4px;color:#4a4a4a">Max Jensen</div>
<div class="tx lnk" style="left:90.5px;top:364px;font-size:5.4px;">Demo</div>
<div class="tx " style="left:235.6px;top:364px;font-size:5.4px;color:#4a4a4a">Archived</div>
<div class="tx " style="left:291.8px;top:364px;font-size:5.4px;color:#4a4a4a">2017-04-21 04:15</div>
<div class="tx lnk" style="left:347.8px;top:364px;font-size:5.4px;">Max Jensen</div>
<div class="tx lnk" style="left:403.6px;top:364px;font-size:5.4px;">South Sea Plumbi...</div>
<div class="a" style="left:460.8px;top:360.15px;width:24px;height:12.1px;background:#f7f7f7;border:0.6px solid #e2e2e2;border-radius:1px"></div>
<div class="a" style="left:472.4px;top:360.15px;width:0.6px;height:12.1px;background:#e2e2e2"></div>
<svg class="a" style="left:463.8px;top:364.35px" width="6.4" height="4.2" viewBox="0 0 6.4 4.2"><path d="M0.1,2.1 Q3.2,-1.1 6.3,2.1 Q3.2,5.3 0.1,2.1Z" fill="#505050"/><circle cx="3.2" cy="2.1" r="1.15" fill="#d0d0d0"/><circle cx="3.2" cy="2.1" r="0.6" fill="#505050"/></svg>
<svg class="a" style="left:477.1px;top:365px" width="3.4" height="2" viewBox="0 0 3.4 2"><polygon points="0,0 3.4,0 1.7,2" fill="#444"/></svg>
<div class="a" style="left:0px;top:374.16px;width:487px;height:16.17px;background:#f5f5f5"></div>
<div class="a" style="left:0px;top:389.98px;width:487px;height:0.7px;background:#ededed"></div>
<div class="a" style="left:6.9px;top:378.80px;width:6.1px;height:5.6px;background:#fff;border:0.6px solid #d4d4d4;border-radius:1.6px"></div>
<svg class="a" style="left:18.5px;top:378.30px" width="7" height="7" viewBox="0 0 7 7"><polygon points="3.5,0.9 4.2,2.6 6.1,2.7 4.6,3.9 5.1,5.9 3.5,4.8 1.9,5.9 2.4,3.9 0.9,2.7 2.8,2.6" fill="none" stroke="#666" stroke-width="0.7" stroke-linejoin="round"/></svg>
<div class="tx " style="left:34.8px;top:380px;font-size:5.4px;color:#4a4a4a">Max Jensen</div>
<div class="tx lnk" style="left:90.5px;top:380px;font-size:5.4px;">Initial discussion</div>
<div class="tx " style="left:235.6px;top:380px;font-size:5.4px;color:#4a4a4a">Archived</div>
<div class="tx " style="left:291.8px;top:380px;font-size:5.4px;color:#4a4a4a">2017-08-23 23:30</div>
<div class="tx lnk" style="left:347.8px;top:380px;font-size:5.4px;">Max Jensen</div>
<div class="tx lnk" style="left:403.6px;top:380px;font-size:5.4px;">South Sea Plumbi...</div>
<div class="a" style="left:460.8px;top:376.30px;width:24px;height:12.1px;background:#f7f7f7;border:0.6px solid #e2e2e2;border-radius:1px"></div>
<div class="a" style="left:472.4px;top:376.30px;width:0.6px;height:12.1px;background:#e2e2e2"></div>
<svg class="a" style="left:463.8px;top:380.50px" width="6.4" height="4.2" viewBox="0 0 6.4 4.2"><path d="M0.1,2.1 Q3.2,-1.1 6.3,2.1 Q3.2,5.3 0.1,2.1Z" fill="#505050"/><circle cx="3.2" cy="2.1" r="1.15" fill="#d0d0d0"/><circle cx="3.2" cy="2.1" r="0.6" fill="#505050"/></svg>
<svg class="a" style="left:477.1px;top:382px" width="3.4" height="2" viewBox="0 0 3.4 2"><polygon points="0,0 3.4,0 1.7,2" fill="#444"/></svg>
<div class="a" style="left:0px;top:390.33px;width:487px;height:16.17px;background:#fff"></div>
<div class="a" style="left:0px;top:406.15px;width:487px;height:0.7px;background:#ededed"></div>
<div class="a" style="left:6.9px;top:394.95px;width:6.1px;height:5.6px;background:#fff;border:0.6px solid #d4d4d4;border-radius:1.6px"></div>
<svg class="a" style="left:18.5px;top:394.45px" width="7" height="7" viewBox="0 0 7 7"><polygon points="3.5,0.9 4.2,2.6 6.1,2.7 4.6,3.9 5.1,5.9 3.5,4.8 1.9,5.9 2.4,3.9 0.9,2.7 2.8,2.6" fill="none" stroke="#666" stroke-width="0.7" stroke-linejoin="round"/></svg>
<div class="tx " style="left:34.8px;top:396px;font-size:5.4px;color:#4a4a4a">Jim Brennan</div>
<div class="tx lnk" style="left:90.5px;top:396px;font-size:5.4px;">Follow-up on proposal</div>
<div class="tx " style="left:235.6px;top:396px;font-size:5.4px;color:#4a4a4a">Archived</div>
<div class="tx " style="left:291.8px;top:396px;font-size:5.4px;color:#4a4a4a">2017-05-09 10:15</div>
<div class="tx lnk" style="left:347.8px;top:396px;font-size:5.4px;">Jim Brennan</div>
<div class="tx lnk" style="left:403.6px;top:396px;font-size:5.4px;">Tri-State Medical ...</div>
<div class="a" style="left:460.8px;top:392.45px;width:24px;height:12.1px;background:#f7f7f7;border:0.6px solid #e2e2e2;border-radius:1px"></div>
<div class="a" style="left:472.4px;top:392.45px;width:0.6px;height:12.1px;background:#e2e2e2"></div>
<svg class="a" style="left:463.8px;top:396.65px" width="6.4" height="4.2" viewBox="0 0 6.4 4.2"><path d="M0.1,2.1 Q3.2,-1.1 6.3,2.1 Q3.2,5.3 0.1,2.1Z" fill="#505050"/><circle cx="3.2" cy="2.1" r="1.15" fill="#d0d0d0"/><circle cx="3.2" cy="2.1" r="0.6" fill="#505050"/></svg>
<svg class="a" style="left:477.1px;top:398px" width="3.4" height="2" viewBox="0 0 3.4 2"><polygon points="0,0 3.4,0 1.7,2" fill="#444"/></svg>
<div class="a" style="left:487px;top:21.7px;width:0.8px;height:384.6px;background:#e0e0e0"></div>
<div class="a" style="left:487.8px;top:21.7px;width:252.2px;height:384.6px;background:#f4f4f4"></div>
<div class="a" style="left:487.8px;top:47px;width:252.2px;height:0.8px;background:#e0e0e0"></div>
<div class="tx " style="left:495.8px;top:31px;font-size:6.6px;color:#4a4a4a;-webkit-text-stroke:0.12px #4a4a4a">Emails Reports</div>
<svg class="a" style="left:545.30px;top:33.10px" width="3.2" height="1.8" viewBox="0 0 3.2 1.8"><polygon points="0,0 3.2,0 1.6,1.8" fill="#666"/></svg>
<svg class="a" style="left:661.6px;top:30.4px" width="7.2" height="7" viewBox="0 0 7.2 7"><polygon points="3.6,0.2 4.5,2.5 6.9,2.6 5,4.1 5.7,6.6 3.6,5.2 1.5,6.6 2.2,4.1 0.3,2.6 2.7,2.5" fill="#555"/></svg>
<div class="a" style="left:698.4px;top:27.4px;width:34.9px;height:11.9px;background:#f9f9f9;border:0.7px solid #d2d2d2;border-radius:1.5px"></div>
<div class="a" style="left:721.4px;top:27.4px;width:0.7px;height:11.9px;background:#d6d6d6"></div>
<div class="tx " style="left:701.8px;top:31px;font-size:5.5px;font-weight:bold;color:#333">Create</div>
<svg class="a" style="left:725.5px;top:33px" width="3.4" height="2" viewBox="0 0 3.4 2"><polygon points="0,0 3.4,0 1.7,2" fill="#444"/></svg>
<div class="a" style="left:495.5px;top:55.6px;width:237px;height:173.20000000000002px;background:#fff;border:0.6px solid #dcdcdc;border-radius:1px;box-shadow:0 0.7px 0.8px rgba(0,0,0,0.07)"></div>
<div class="a" style="left:496.1px;top:56.2px;width:235.8px;height:13.9px;background:#f7f7f7"></div>
<div class="a" style="left:496.1px;top:70.1px;width:235.8px;height:0.6px;background:#e6e6e6"></div>
<div class="tx " style="left:500.4px;top:60px;font-size:6.8px;color:#333;-webkit-text-stroke:0.2px #333">My Emails By Account (Last 30 Days)</div>
<svg class="a" style="left:709.7px;top:61.2px" width="6.2" height="4" viewBox="0 0 6.2 4"><polyline points="0.6,3.3 3.1,0.9 5.6,3.3" fill="none" stroke="#444" stroke-width="1.1"/></svg>
<svg class="a" style="left:720.1px;top:58.2px" width="9" height="9" viewBox="0 0 9 9"><circle cx="4.5" cy="4.5" r="1.57" fill="none" stroke="#555" stroke-width="1.35"/><rect x="4.00" y="1.80" width="1.0" height="1.35" rx="0.2" fill="#555" transform="rotate(22.5 4.5 4.5)"/><rect x="4.00" y="1.80" width="1.0" height="1.35" rx="0.2" fill="#555" transform="rotate(67.5 4.5 4.5)"/><rect x="4.00" y="1.80" width="1.0" height="1.35" rx="0.2" fill="#555" transform="rotate(112.5 4.5 4.5)"/><rect x="4.00" y="1.80" width="1.0" height="1.35" rx="0.2" fill="#555" transform="rotate(157.5 4.5 4.5)"/><rect x="4.00" y="1.80" width="1.0" height="1.35" rx="0.2" fill="#555" transform="rotate(202.5 4.5 4.5)"/><rect x="4.00" y="1.80" width="1.0" height="1.35" rx="0.2" fill="#555" transform="rotate(247.5 4.5 4.5)"/><rect x="4.00" y="1.80" width="1.0" height="1.35" rx="0.2" fill="#555" transform="rotate(292.5 4.5 4.5)"/><rect x="4.00" y="1.80" width="1.0" height="1.35" rx="0.2" fill="#555" transform="rotate(337.5 4.5 4.5)"/></svg>
<div class="a" style="left:538px;top:73.7px;width:6px;height:6px;border-radius:50%;background:#1f77b4"></div>
<div class="tx " style="left:545.7px;top:75px;font-size:5.0px;color:#4a4a4a">USMC</div>
<div class="a" style="left:564px;top:73.7px;width:6px;height:6px;border-radius:50%;background:#aec7e8"></div>
<div class="tx " style="left:571.8px;top:75px;font-size:5.0px;color:#4a4a4a">Tiny Corp</div>
<div class="a" style="left:596.8px;top:73.7px;width:6px;height:6px;border-radius:50%;background:#ff7f0e"></div>
<div class="tx " style="left:604.9px;top:75px;font-size:5.0px;color:#4a4a4a">SHIELD LLC</div>
<div class="a" style="left:635px;top:73.7px;width:6px;height:6px;border-radius:50%;background:#ffbb78"></div>
<div class="tx " style="left:643px;top:75px;font-size:5.0px;color:#4a4a4a">Professor M's School</div>
<svg class="a" style="left:0;top:0" width="740" height="426" viewBox="0 0 740 426"><path d="M614.2,153.3 L614.20,102.70 A50.6,50.6 0 0 1 653.76,121.75 Z" fill="#1f77b4" stroke="#fff" stroke-width="0.8"/><path d="M614.2,153.3 L653.76,121.75 A50.6,50.6 0 0 1 636.15,198.89 Z" fill="#aec7e8" stroke="#fff" stroke-width="0.8"/><path d="M614.2,153.3 L636.15,198.89 A50.6,50.6 0 0 1 564.87,164.56 Z" fill="#ff7f0e" stroke="#fff" stroke-width="0.8"/><path d="M614.2,153.3 L564.87,164.56 A50.6,50.6 0 0 1 614.20,102.70 Z" fill="#ffbb78" stroke="#fff" stroke-width="0.8"/><polyline points="637.6,105.2 643.7,100.7 646,100.7" fill="none" stroke="#aaa" stroke-width="0.5"/><polyline points="563,118.6 566.5,118.6 572,122.5" fill="none" stroke="#aaa" stroke-width="0.5"/><polyline points="665.7,165.8 676,165.8" fill="none" stroke="#aaa" stroke-width="0.5"/><polyline points="583,204.5 587.5,204.5 590.3,200" fill="none" stroke="#aaa" stroke-width="0.5"/></svg>
<div class="tx " style="left:647px;top:100px;font-size:5.0px;color:#444">USMC</div>
<div class="tx " style="left:515.3px;top:116px;font-size:4.9px;color:#444">Professor M's School</div>
<div class="tx " style="left:677.8px;top:164px;font-size:5.0px;color:#444">Tiny Corp</div>
<div class="tx " style="left:553.5px;top:203px;font-size:4.9px;color:#444">SHIELD LLC</div>
<div class="a" style="left:495.5px;top:242.4px;width:237px;height:197.6px;background:#fff;border:0.6px solid #dcdcdc;border-radius:1px;box-shadow:0 0.7px 0.8px rgba(0,0,0,0.07)"></div>
<div class="a" style="left:496.1px;top:243.0px;width:235.8px;height:13.9px;background:#f7f7f7"></div>
<div class="a" style="left:496.1px;top:256.9px;width:235.8px;height:0.6px;background:#e6e6e6"></div>
<div class="tx " style="left:500.4px;top:247px;font-size:6.8px;color:#333;-webkit-text-stroke:0.2px #333">All Emails By User (Last 7 Days)</div>
<svg class="a" style="left:709.7px;top:248.0px" width="6.2" height="4" viewBox="0 0 6.2 4"><polyline points="0.6,3.3 3.1,0.9 5.6,3.3" fill="none" stroke="#444" stroke-width="1.1"/></svg>
<svg class="a" style="left:720.1px;top:245.0px" width="9" height="9" viewBox="0 0 9 9"><circle cx="4.5" cy="4.5" r="1.57" fill="none" stroke="#555" stroke-width="1.35"/><rect x="4.00" y="1.80" width="1.0" height="1.35" rx="0.2" fill="#555" transform="rotate(22.5 4.5 4.5)"/><rect x="4.00" y="1.80" width="1.0" height="1.35" rx="0.2" fill="#555" transform="rotate(67.5 4.5 4.5)"/><rect x="4.00" y="1.80" width="1.0" height="1.35" rx="0.2" fill="#555" transform="rotate(112.5 4.5 4.5)"/><rect x="4.00" y="1.80" width="1.0" height="1.35" rx="0.2" fill="#555" transform="rotate(157.5 4.5 4.5)"/><rect x="4.00" y="1.80" width="1.0" height="1.35" rx="0.2" fill="#555" transform="rotate(202.5 4.5 4.5)"/><rect x="4.00" y="1.80" width="1.0" height="1.35" rx="0.2" fill="#555" transform="rotate(247.5 4.5 4.5)"/><rect x="4.00" y="1.80" width="1.0" height="1.35" rx="0.2" fill="#555" transform="rotate(292.5 4.5 4.5)"/><rect x="4.00" y="1.80" width="1.0" height="1.35" rx="0.2" fill="#555" transform="rotate(337.5 4.5 4.5)"/></svg>
<div class="a" style="left:563.7px;top:260.7px;width:6px;height:6px;border-radius:50%;background:#1f77b4"></div>
<div class="tx " style="left:571px;top:262px;font-size:5.0px;color:#4a4a4a">chris</div>
<div class="a" style="left:586px;top:260.7px;width:6px;height:6px;border-radius:50%;background:#aec7e8"></div>
<div class="tx " style="left:593.7px;top:262px;font-size:5.0px;color:#4a4a4a">jessica</div>
<div class="a" style="left:612px;top:260.7px;width:6px;height:6px;border-radius:50%;background:#ff7f0e"></div>
<div class="tx " style="left:620px;top:262px;font-size:5.0px;color:#4a4a4a">jim</div>
<div class="a" style="left:633.3px;top:260.7px;width:6px;height:6px;border-radius:50%;background:#ffbb78"></div>
<div class="tx " style="left:641px;top:262px;font-size:5.0px;color:#4a4a4a">marco</div>
<div class="a" style="left:657.6px;top:260.7px;width:6px;height:6px;border-radius:50%;background:#2ca02c"></div>
<div class="tx " style="left:665.7px;top:262px;font-size:5.0px;color:#4a4a4a">max</div>
<div class="a" style="left:678.9px;top:260.7px;width:6px;height:6px;border-radius:50%;background:#98df8a"></div>
<div class="tx " style="left:687px;top:262px;font-size:5.0px;color:#4a4a4a">sally</div>
<div class="a" style="left:699.2px;top:260.7px;width:6px;height:6px;border-radius:50%;background:#d62728"></div>
<div class="tx " style="left:707.2px;top:262px;font-size:5.0px;color:#4a4a4a">sarah</div>
<svg class="a" style="left:0;top:0" width="740" height="426" viewBox="0 0 740 426"><line x1="542.80" y1="272" x2="542.80" y2="401" stroke="#e8e8e8" stroke-width="0.6"/><line x1="565.20" y1="272" x2="565.20" y2="401" stroke="#e8e8e8" stroke-width="0.6"/><line x1="587.60" y1="272" x2="587.60" y2="401" stroke="#e8e8e8" stroke-width="0.6"/><line x1="610.00" y1="272" x2="610.00" y2="401" stroke="#e8e8e8" stroke-width="0.6"/><line x1="632.40" y1="272" x2="632.40" y2="401" stroke="#e8e8e8" stroke-width="0.6"/><line x1="654.80" y1="272" x2="654.80" y2="401" stroke="#e8e8e8" stroke-width="0.6"/><line x1="677.20" y1="272" x2="677.20" y2="401" stroke="#e8e8e8" stroke-width="0.6"/><line x1="699.60" y1="272" x2="699.60" y2="401" stroke="#e8e8e8" stroke-width="0.6"/><line x1="520.4" y1="400.5" x2="722" y2="400.5" stroke="#e4e4e4" stroke-width="0.6"/><line x1="520.4" y1="272" x2="520.4" y2="401" stroke="#888" stroke-width="0.6"/><line x1="722" y1="272" x2="722" y2="401" stroke="#888" stroke-width="0.6"/><rect x="520.4" y="286.50" width="89.60" height="10.6" fill="#1f77b4"/><rect x="520.4" y="301.30" width="67.20" height="10.6" fill="#aec7e8"/><rect x="520.4" y="315.90" width="134.40" height="10.6" fill="#ff7f0e"/><rect x="520.4" y="330.70" width="156.80" height="10.6" fill="#ffbb78"/><rect x="520.4" y="345.60" width="201.60" height="10.6" fill="#2ca02c"/><rect x="520.4" y="360.40" width="201.60" height="10.6" fill="#98df8a"/><rect x="520.4" y="375.70" width="89.60" height="10.6" fill="#d62728"/></svg>
<div class="tx " style="right:222px;top:289px;font-size:5.0px;color:#444">chris</div>
<div class="tx " style="right:222px;top:304px;font-size:5.0px;color:#444">jessica</div>
<div class="tx " style="right:222px;top:319px;font-size:5.0px;color:#444">jim</div>
<div class="tx " style="right:222px;top:333px;font-size:5.0px;color:#444">marco</div>
<div class="tx " style="right:222px;top:348px;font-size:5.0px;color:#444">max</div>
<div class="tx " style="right:222px;top:363px;font-size:5.0px;color:#444">sally</div>
<div class="tx " style="right:222px;top:378px;font-size:5.0px;color:#444">sarah</div>
<div class="tx " style="left:520.4px;transform:translateX(-50%);top:402px;font-size:5.0px;color:#444">0</div>
<div class="tx " style="left:542.8px;transform:translateX(-50%);top:402px;font-size:5.0px;color:#444">1.0</div>
<div class="tx " style="left:565.2px;transform:translateX(-50%);top:402px;font-size:5.0px;color:#444">2</div>
<div class="tx " style="left:587.6px;transform:translateX(-50%);top:402px;font-size:5.0px;color:#444">3</div>
<div class="tx " style="left:610.0px;transform:translateX(-50%);top:402px;font-size:5.0px;color:#444">4</div>
<div class="tx " style="left:632.4px;transform:translateX(-50%);top:402px;font-size:5.0px;color:#444">5</div>
<div class="tx " style="left:654.8px;transform:translateX(-50%);top:402px;font-size:5.0px;color:#444">6</div>
<div class="tx " style="left:677.2px;transform:translateX(-50%);top:402px;font-size:5.0px;color:#444">7</div>
<div class="tx " style="left:699.6px;transform:translateX(-50%);top:402px;font-size:5.0px;color:#444">8</div>
<div class="tx " style="left:722.0px;transform:translateX(-50%);top:402px;font-size:5.0px;color:#444">9</div>
<div class="a" style="left:0px;top:406.3px;width:740px;height:19.7px;background:#f4f4f4"></div>
<div class="a" style="left:0px;top:406px;width:740px;height:0.7px;background:#dcdcdc"></div>
<svg class="a" style="left:4.8px;top:412.6px" width="7" height="7" viewBox="0 0 7 7"><polygon points="3.2,0.2 6.6,1.8 3.4,3.3 0.2,1.8" fill="#c0262c"/><polygon points="0.2,1.8 3.4,3.3 3.4,6.8 0.2,5.2" fill="#1c1c1c"/><polygon points="3.4,3.3 6.6,1.8 6.6,5.2 3.4,6.8" fill="#cfcfcf"/></svg>
<div class="tx" style="left:13.8px;top:414px;font-size:6.4px;font-weight:bold;color:#222;transform:scaleX(1.3);transform-origin:0 0;letter-spacing:0.1px">SUGAR<span style="color:#c8c8c8">CRM</span></div>
<svg class="a" style="left:601.2px;top:413.2px" width="3" height="6" viewBox="0 0 3 6"><rect x="0.3" y="0.3" width="2.4" height="5.4" rx="0.4" fill="none" stroke="#555" stroke-width="0.55"/></svg>
<div class="tx " style="left:607.6px;top:414px;font-size:5.5px;color:#444">Mobile</div>
<svg class="a" style="left:633.6px;top:413.8px" width="7" height="5" viewBox="0 0 7 5"><rect x="0.3" y="0.3" width="6.4" height="4.4" rx="0.4" fill="#eee" stroke="#666" stroke-width="0.5"/><line x1="1.2" y1="3.5" x2="5.8" y2="3.5" stroke="#666" stroke-width="0.45"/><line x1="1.2" y1="1.7" x2="5.8" y2="1.7" stroke="#888" stroke-width="0.45" stroke-dasharray="0.6 0.5"/></svg>
<div class="tx " style="left:641px;top:414px;font-size:5.5px;color:#444">Shortcuts</div>
<svg class="a" style="left:674px;top:413.3px" width="6.6" height="6" viewBox="0 0 6.6 6"><ellipse cx="3.3" cy="2.5" rx="3.1" ry="2.3" fill="#555"/><polygon points="1,4 0.6,5.8 2.7,4.5" fill="#555"/></svg>
<div class="tx " style="left:682px;top:414px;font-size:5.5px;color:#444">Feedback</div>
<svg class="a" style="left:714.8px;top:413.3px" width="6" height="6" viewBox="0 0 6 6"><circle cx="3" cy="3" r="2.9" fill="#555"/><text x="3" y="4.9" font-size="5" font-weight="bold" text-anchor="middle" fill="#fff" font-family="Liberation Sans">?</text></svg>
<div class="tx " style="left:721.8px;top:414px;font-size:5.5px;color:#444">Help</div>
</div></body></html>
